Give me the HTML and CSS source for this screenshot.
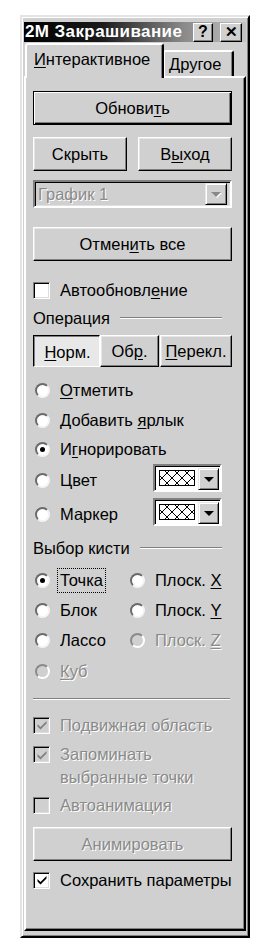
FILE: index.html
```html
<!DOCTYPE html>
<html lang="ru">
<head>
<meta charset="utf-8">
<title>2М Закрашивание</title>
<link rel="stylesheet" href="styles.css">
</head>
<body>
<div class="window">
  <div class="titlebar">
    <span class="title">2М Закрашивание</span>
    <span class="tbtn">?</span>
    <span class="tbtn close">✕</span>
  </div>
  <div class="tabs">
    <div class="tab active"><u>И</u>нтерактивное</div>
    <div class="tab"><u>Д</u>ругое</div>
  </div>
  <div class="panel">
    <div class="btn default r-update">Обнови<u>т</u>ь</div>
    <div class="btn-row r-hide">
      <div class="btn">Скрыть</div>
      <div class="btn">В<u>ы</u>ход</div>
    </div>
    <div class="combo r-combo">
      <span class="combo-text dis">График 1</span>
      <span class="arrow-btn"><span class="tri gray"></span></span>
    </div>
    <div class="btn r-cancel">Отмен<u>и</u>ть все</div>
    <div class="check-row r-auto"><span class="cb"></span><span>Автообновл<u>е</u>ние</span></div>
    <div class="group r-op"><span>Операция</span><span class="gline"></span></div>
    <div class="toggles r-tog">
      <div class="btn tg pressed"><u>Н</u>орм.</div>
      <div class="btn tg t2">Об<u>р</u>.</div>
      <div class="btn tg t3"><u>П</u>ерекл.</div>
    </div>
    <div class="radio-row r-r1"><span class="rb"></span><span><u>О</u>тметить</span></div>
    <div class="radio-row r-r2"><span class="rb"></span><span><u>Д</u>обавить <u>я</u>рлык</span></div>
    <div class="radio-row r-r3"><span class="rb on"></span><span>И<u>г</u>норировать</span></div>
    <div class="radio-row pick-row r-r4"><span class="rb"></span><span class="plabel">Цвет</span>
      <span class="picker"><span class="swatch"><span class="hatch"></span></span><span class="arrow-btn"><span class="tri"></span></span></span>
    </div>
    <div class="radio-row pick-row r-r5"><span class="rb"></span><span class="plabel">Маркер</span>
      <span class="picker"><span class="swatch"><span class="hatch"></span></span><span class="arrow-btn"><span class="tri"></span></span></span>
    </div>
    <div class="group r-brush"><span>Выбор кисти</span><span class="gline"></span></div>
    <div class="brush-grid">
      <div class="radio-row"><span class="rb on"></span><span class="focus">Точка</span></div>
      <div class="radio-row"><span class="rb"></span><span>Плоск. <u>X</u></span></div>
      <div class="radio-row"><span class="rb"></span><span>Блок</span></div>
      <div class="radio-row"><span class="rb"></span><span>Плоск. <u>Y</u></span></div>
      <div class="radio-row"><span class="rb"></span><span>Лассо</span></div>
      <div class="radio-row"><span class="rb disabled"></span><span class="dis">Плоск. <u>Z</u></span></div>
      <div class="radio-row last"><span class="rb disabled"></span><span class="dis"><u>К</u>уб</span></div>
    </div>
    <div class="sep"></div>
    <div class="check-row r-c1"><span class="cb disabled checked"><svg viewBox="0 0 12 12"><path d="M1.5 5 L4.5 8 L10.5 2 L10.5 4.5 L4.5 10.5 L1.5 7.5 Z"/></svg></span><span class="dis">Подвижная область</span></div>
    <div class="check-row multi r-c2"><span class="cb disabled checked"><svg viewBox="0 0 12 12"><path d="M1.5 5 L4.5 8 L10.5 2 L10.5 4.5 L4.5 10.5 L1.5 7.5 Z"/></svg></span><span class="dis">Запоминать<br>выбранные точки</span></div>
    <div class="check-row r-c3"><span class="cb disabled"></span><span class="dis">Автоанимация</span></div>
    <div class="btn r-anim"><span class="dis">Анимировать</span></div>
    <div class="check-row r-c4"><span class="cb checked"><svg viewBox="0 0 12 12"><path d="M1.5 5 L4.5 8 L10.5 2 L10.5 4.5 L4.5 10.5 L1.5 7.5 Z"/></svg></span><span>Сохранить параметры</span></div>
  </div>
</div>
</body>
</html>
```
FILE: styles.css
```css
* { box-sizing: border-box; }
body {
  margin: 0;
  background: #fff;
  font-family: "Liberation Sans", Arial, sans-serif;
  font-size: 16.5px;
  color: #000;
}
u { text-decoration: underline; text-underline-offset: 2px; }

.window {
  margin: 15px 0 0 20px;
  width: 230px;
  height: 923px;
  background: #d0d0d0;
  border: 2px solid;
  border-color: #e4e4e4 #000 #000 #e4e4e4;
  box-shadow: inset 1px 1px #fff, inset -1px -1px #808080;
  padding: 5px 2px 5px 2px;
  display: flex;
  flex-direction: column;
}

.titlebar {
  height: 20px;
  display: flex;
  align-items: center;
  padding: 0 4px 0 1px;
  background: linear-gradient(to right, #000 0%, #1a1a1a 35%, #8a8a8a 72%, #c4c4c4 100%);
}
.title {
  flex: 1;
  color: #fff;
  font-weight: bold;
  font-size: 17px;
  letter-spacing: 0.4px;
  white-space: nowrap;
  overflow: hidden;
}
.tbtn {
  width: 20px;
  height: 19px;
  display: flex;
  align-items: center;
  justify-content: center;
  font-weight: bold;
  font-size: 16px;
  background: #d0d0d0;
  border: 1px solid;
  border-color: #fff #000 #000 #fff;
  box-shadow: inset -1px -1px #808080;
}
.tbtn.close { margin-left: 7px; width: 22px; font-size: 15px; }

.tabs {
  height: 34px;
  display: flex;
  align-items: flex-end;
  padding-left: 1px;
}
.tab {
  height: 26px;
  padding: 0 6px 0 5px;
  display: flex;
  align-items: center;
  background: #d0d0d0;
  border: 2px solid;
  border-bottom: none;
  border-color: #fff #000 #000 #fff;
  box-shadow: inset -1px 0 #808080;
  border-radius: 3px 3px 0 0;
  white-space: nowrap;
}
.tab.active {
  height: 35px;
  width: 139px;
  margin-bottom: -2px;
  padding-bottom: 4px;
  position: relative;
  z-index: 1;
  padding-left: 7px;
}
.tab:not(.active) { width: 71px; margin-left: -1px; padding-left: 4px; }

.panel {
  flex: 1;
  border: 2px solid;
  border-color: #fff #000 #000 #fff;
  box-shadow: inset -1px -1px #808080;
  padding: 0 12px 0 7px;
  display: flex;
  flex-direction: column;
}

.btn {
  height: 34px;
  display: flex;
  align-items: center;
  justify-content: center;
  background: #d0d0d0;
  border: 1px solid;
  border-color: #fff #000 #000 #fff;
  box-shadow: inset -1px -1px #808080, inset 1px 1px #e6e6e6;
  white-space: nowrap;
}
.btn.default {
  border: 1px solid #000;
  box-shadow: inset 1px 1px #fff, inset -1px -1px #000, inset -2px -2px #808080;
}
.r-update { margin-top: 13px; }
.btn-row { display: flex; gap: 11px; margin-top: 12px; }
.btn-row .btn { flex: 1; }
.combo {
  margin-top: 9px;
  height: 28px;
  display: flex;
  align-items: center;
  border: 2px solid;
  border-color: #808080 #fff #fff #808080;
  box-shadow: inset 1px 1px #000, inset -1px -1px #e0e0e0;
  padding: 0 3px 0 3px;
}
.combo-text { flex: 1; }
.arrow-btn {
  width: 22px;
  height: 22px;
  display: flex;
  align-items: center;
  justify-content: center;
  background: #d0d0d0;
  border: 1px solid;
  border-color: #e8e8e8 #000 #000 #e8e8e8;
  box-shadow: inset 1px 1px #fff, inset -1px -1px #808080;
}
.tri {
  width: 0; height: 0;
  border-left: 5px solid transparent;
  border-right: 5px solid transparent;
  border-top: 5px solid #000;
}
.tri.gray { border-top-color: #888; filter: drop-shadow(1px 1px 0 #fff); }
.r-cancel { margin-top: 19px; }

.dis { color: #8a8a8a; text-shadow: 1px 1px 0 #fff; }

.check-row, .radio-row {
  display: flex;
  align-items: center;
  height: 20px;
  white-space: nowrap;
}
.cb {
  width: 17px;
  height: 17px;
  flex: none;
  margin-right: 10px;
  background: #fff;
  border: 1px solid;
  border-color: #808080 #fff #fff #808080;
  box-shadow: inset 1px 1px #000, inset -1px -1px #dcdcdc;
  display: flex;
  align-items: center;
  justify-content: center;
}
.cb svg { width: 12px; height: 12px; fill: #000; }
.cb.disabled { background: #d0d0d0; }
.cb.disabled svg { fill: #808080; }
.r-auto { margin-top: 19px; }

.group { display: flex; align-items: center; height: 20px; margin-top: 8px; }
.gline {
  flex: 1;
  height: 2px;
  border-top: 1px solid #808080;
  border-bottom: 1px solid #fff;
  margin: 0 10px 0 10px;
}
.toggles { display: flex; margin-top: 7px; }
.btn.tg { height: 32px; width: 67px; }
.btn.tg.t2 { width: 59px; }
.btn.tg.t3 { width: 72px; margin-left: 1px; }
.btn.pressed {
  border-color: #000 #fff #fff #000;
  box-shadow: inset 1px 1px #808080;
  background: #e8e8e8;
  padding-top: 2px;
  padding-left: 2px;
}

.rb {
  width: 15px;
  height: 15px;
  flex: none;
  margin: 0 10px 0 2px;
  border-radius: 50%;
  background: #fff;
  border: 2px solid;
  border-color: #6a6a6a #f4f4f4 #f4f4f4 #6a6a6a;
  display: flex;
  align-items: center;
  justify-content: center;
}
.rb.on::after {
  content: "";
  width: 5px;
  height: 5px;
  border-radius: 50%;
  background: #000;
}
.rb.disabled { background: #d0d0d0; border-color: #8a8a8a #fff #fff #8a8a8a; }

.r-r1 { margin-top: 13px; }
.r-r2 { margin-top: 10px; }
.r-r3 { margin-top: 9px; }
.pick-row { height: 30px; }
.pick-row .rb, .pick-row .plabel { margin-top: 5px; }
.r-r4 { margin-top: 4px; }
.r-r5 { margin-top: 4px; }
.picker {
  margin-left: auto;
  margin-right: 10px;
  display: flex;
  width: 69px;
  height: 28px;
  border: 2px solid;
  border-color: #808080 #fff #fff #808080;
  box-shadow: inset 1px 1px #000;
  background: #fff;
  padding: 2px 1px 2px 3px;
}
.swatch { flex: 1; padding: 2px 3px 2px 1px; display: flex; }
.hatch {
  flex: 1;
  background:
    repeating-linear-gradient(45deg, transparent 0 6px, #000 6px 7px),
    repeating-linear-gradient(-45deg, transparent 0 6px, #000 6px 7px),
    #fff;
  border: 1px solid #000;
}
.picker .arrow-btn { width: 21px; height: 22px; }

.r-brush { margin-top: 11px; }
.brush-grid {
  display: grid;
  grid-template-columns: 95px 1fr;
  grid-auto-rows: 30px;
  margin-top: 7px;
}
.brush-grid .radio-row { height: 30px; }
.brush-grid .radio-row.last { padding-top: 3px; }
.focus { outline: 1px dotted #000; outline-offset: 2px; }

.sep {
  height: 2px;
  border-top: 1px solid #808080;
  border-bottom: 1px solid #fff;
  margin: 13px 2px 0 0;
}
.r-c1 { margin-top: 15px; }
.check-row.multi { height: auto; align-items: flex-start; margin-top: 8px; line-height: 23px; }
.check-row.multi .cb { margin-top: 3px; }
.r-c3 { margin-top: 6px; }
.r-anim { margin-top: 12px; }
.r-c4 { margin-top: 9px; }
```
